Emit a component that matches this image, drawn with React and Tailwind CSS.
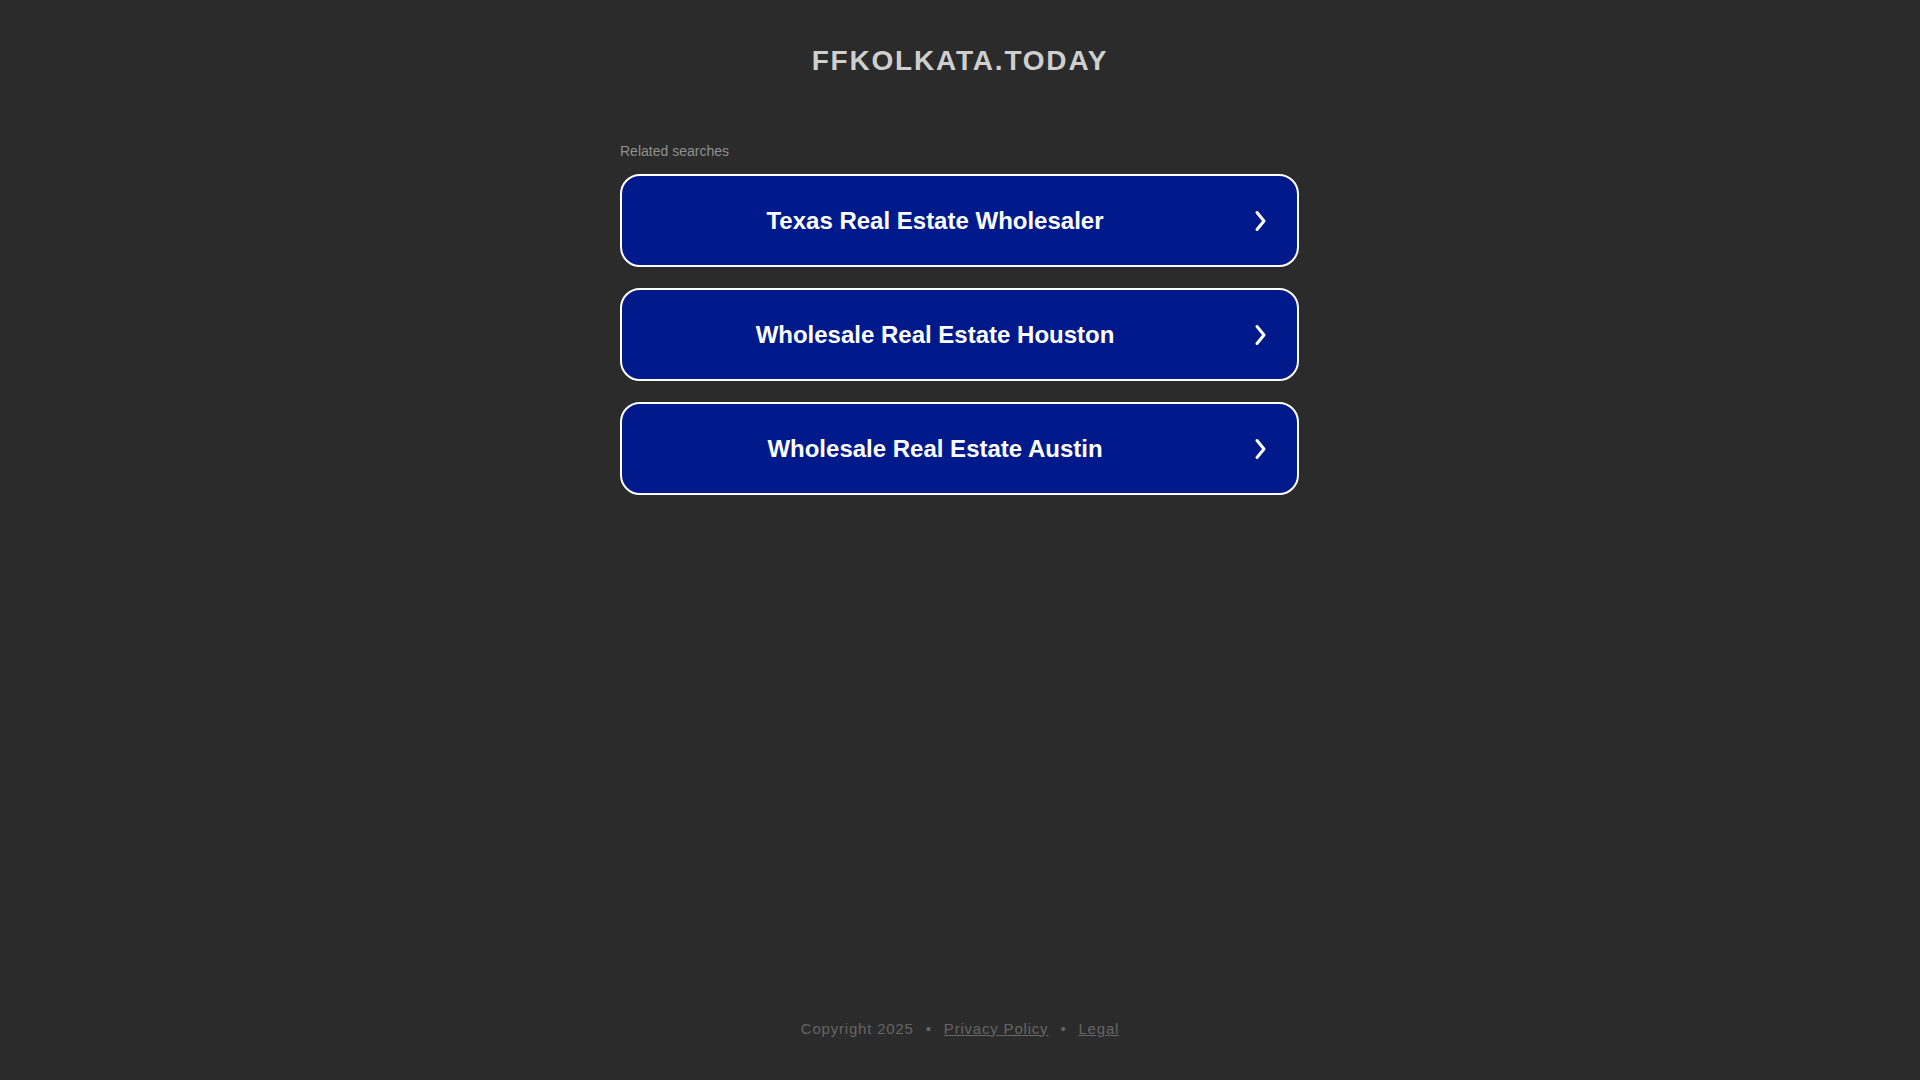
import React from "react";

const items = [
  "Texas Real Estate Wholesaler",
  "Wholesale Real Estate Houston",
  "Wholesale Real Estate Austin",
];

function Chevron() {
  return (
    <svg width="24" height="24" viewBox="0 0 24 24" fill="none" stroke="white" strokeWidth="3" strokeLinecap="round" strokeLinejoin="round" className="shrink-0">
      <path d="M9 3.5 L16 12 L9 20.5" />
    </svg>
  );
}

export default function App() {
  return (
    <div className="min-h-[1080px] h-[1080px] bg-[#2b2b2b] flex flex-col items-center" style={{ fontFamily: '"Liberation Sans", Arial, sans-serif' }}>
      <h1 className="mt-[45px] h-[32px] leading-[32px] text-[28px] font-bold tracking-[1.8px] text-[#cfcfcf]">
        FFKOLKATA.TODAY
      </h1>
      <div className="w-[680px] mt-[65px]">
        <div className="text-[14px] leading-[18px] text-[#909090] mb-[14px]">Related searches</div>
        <div className="flex flex-col gap-[21px]">
          {items.map((t) => (
            <a key={t} href="#" className="h-[93px] w-[679px] flex items-center rounded-[20px] border-2 border-white bg-[#011a8b] pr-[25px]">
              <span className="flex-1 text-center text-white text-[24px] font-bold">{t}</span>
              <Chevron />
            </a>
          ))}
        </div>
      </div>
      <div className="flex-1" />
      <div className="mb-[40px] text-[15px] tracking-[0.8px] text-[#656565] flex items-center">
        <span>Copyright 2025</span>
        <span className="mx-[12px]">•</span>
        <a href="#" className="underline">Privacy Policy</a>
        <span className="mx-[12px]">•</span>
        <a href="#" className="underline">Legal</a>
      </div>
    </div>
  );
}
